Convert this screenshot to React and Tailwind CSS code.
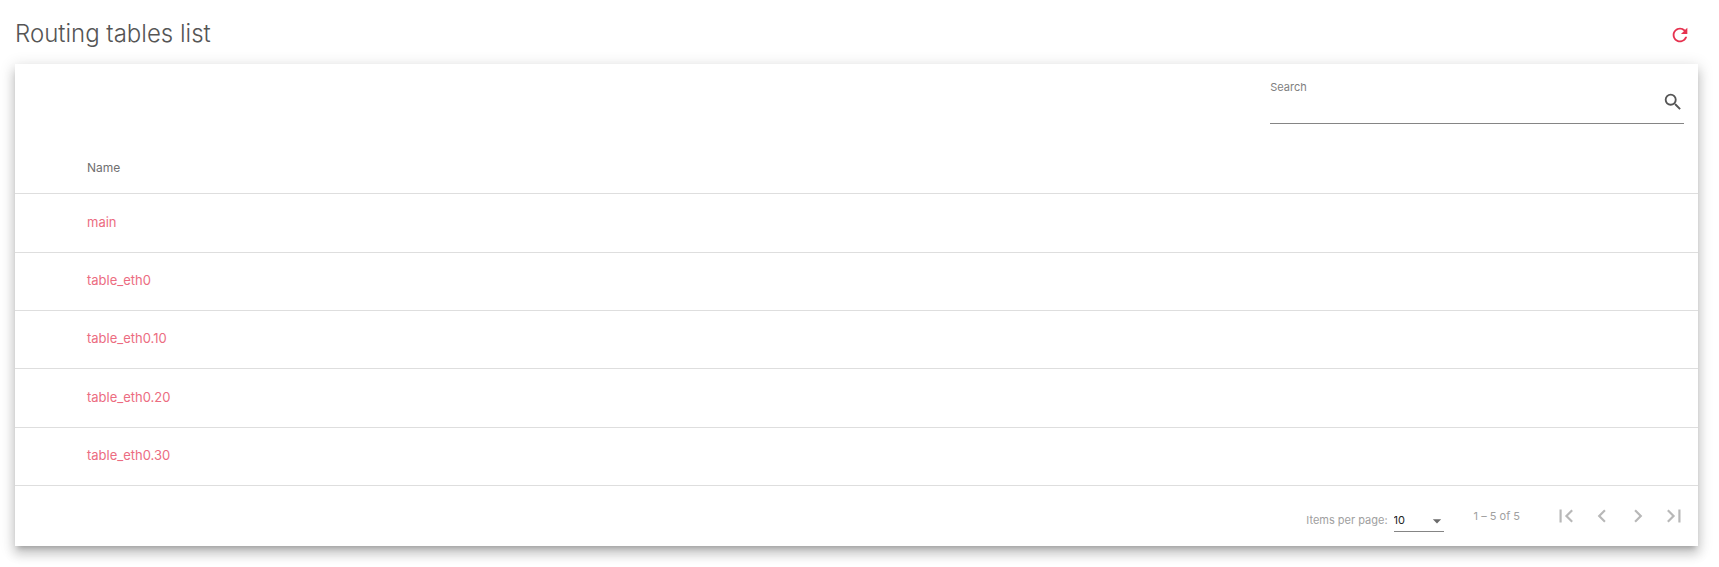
import { useState } from "react";
import {
  MdRefresh,
  MdSearch,
  MdFirstPage,
  MdChevronLeft,
  MdChevronRight,
  MdLastPage,
  MdArrowDropDown,
} from "react-icons/md";

const tables = ["main", "table_eth0", "table_eth0.10", "table_eth0.20", "table_eth0.30"];

const pagerButtons = [
  { label: "First page", Icon: MdFirstPage },
  { label: "Previous page", Icon: MdChevronLeft },
  { label: "Next page", Icon: MdChevronRight },
  { label: "Last page", Icon: MdLastPage },
];

function Header() {
  return (
    <header className="flex h-16 items-center justify-between pt-1 pr-1.5">
      <h1 className="text-2xl leading-7 font-light text-[#555]">Routing tables list</h1>
      <button
        type="button"
        aria-label="Refresh"
        className="mt-0.5 flex size-6 items-center justify-center text-[#e6324f]"
      >
        <MdRefresh size={22} />
      </button>
    </header>
  );
}

function SearchField({ value, onChange }) {
  return (
    <div className="flex w-1/4 items-center border-b border-[#858585]">
      <div className="flex grow flex-col">
        <label htmlFor="search" className="text-[11px] leading-4 text-[#808080]">
          Search
        </label>
        <input
          id="search"
          value={value}
          onChange={(e) => onChange(e.target.value)}
          className="h-7 w-full bg-transparent text-[13px] text-[#333] outline-none"
        />
      </div>
      <MdSearch size={22} className="mt-0.5 text-[#555]" />
    </div>
  );
}

function Paginator() {
  return (
    <footer className="flex h-[60px] items-center justify-end pr-1.5 text-[11px] leading-4 text-[#a0a0a0]">
      <div className="mt-2 flex items-center gap-1.5">
        <label htmlFor="page-size">Items per page:</label>
        <div className="relative w-[50px] border-b border-[#858585]">
          <select
            id="page-size"
            defaultValue="10"
            className="block h-[22px] w-full appearance-none bg-transparent text-[#222] outline-none"
          >
            <option>5</option>
            <option>10</option>
            <option>20</option>
          </select>
          <MdArrowDropDown
            size={20}
            className="pointer-events-none absolute top-0.5 -right-[3px] text-[#6b6b6b]"
          />
        </div>
      </div>
      <span className="mr-7 ml-[30px]">1 – 5 of 5</span>
      <div className="flex">
        {pagerButtons.map(({ label, Icon }) => (
          <button
            key={label}
            type="button"
            disabled
            aria-label={label}
            className="flex size-9 items-center justify-center text-[#b8b8b8]"
          >
            <Icon size={26} />
          </button>
        ))}
      </div>
    </footer>
  );
}

export default function App() {
  const [query, setQuery] = useState("");
  const rows = tables.filter((name) => name.includes(query));

  return (
    <main className="bg-white pr-[21px] pb-[21px] pl-[15px] font-['Inter',sans-serif]">
      <Header />
      <section className="bg-white shadow-[0_5px_5px_-3px_rgba(0,0,0,0.2),0_8px_10px_1px_rgba(0,0,0,0.14),0_3px_14px_2px_rgba(0,0,0,0.12)]">
        <div className="flex justify-end px-3.5 pt-[15px]">
          <SearchField value={query} onChange={setQuery} />
        </div>
        <table className="w-full border-separate border-spacing-0 text-left">
          <thead>
            <tr className="h-[70px]">
              <th
                scope="col"
                className="border-b border-[#dedede] pt-[18px] pl-[72px] text-xs leading-4 font-normal text-[#707070]"
              >
                Name
              </th>
            </tr>
          </thead>
          <tbody>
            {rows.map((name) => (
              <tr key={name} className="h-[58px] nth-[3n+1]:h-[59px]">
                <td className="border-b border-[#dedede] pb-[3px] pl-[72px] text-[13px] leading-5 font-normal">
                  <a href="#" className="text-[#ec6c81]">
                    {name}
                  </a>
                </td>
              </tr>
            ))}
          </tbody>
        </table>
        <Paginator />
      </section>
    </main>
  );
}
